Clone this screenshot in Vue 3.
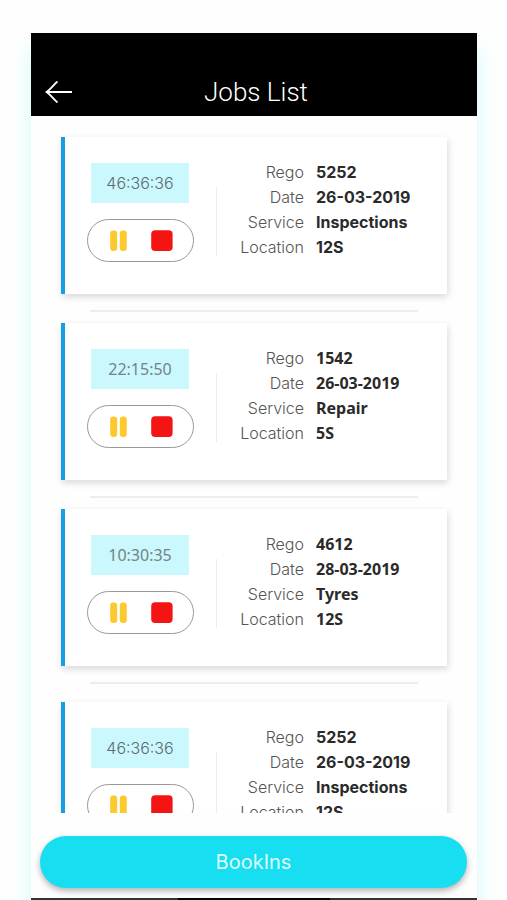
<script setup>
import { ref } from 'vue'

const jobs = ref([
  { id: 1, time: '46:36:36', rego: '5252', date: '26-03-2019', service: 'Inspections', location: '12S' },
  { id: 2, time: '22:15:50', rego: '1542', date: '26-03-2019', service: 'Repair', location: '5S', alt: true },
  { id: 3, time: '10:30:35', rego: '4612', date: '28-03-2019', service: 'Tyres', location: '12S', alt: true, wide: true },
  { id: 4, time: '46:36:36', rego: '5252', date: '26-03-2019', service: 'Inspections', location: '12S' },
])
</script>

<template>
  <div class="page">
    <div class="phone">
      <header class="topbar">
        <a href="#" class="back" aria-label="Back">
          <svg width="28" height="24" viewBox="0 0 28 24" fill="none" stroke="#fff" stroke-width="1.8">
            <path d="M27 12H2M12.5 1.5C9 4 6 9 1.5 12C6 15 9 20 12.5 22.5" />
          </svg>
        </a>
        <h1 class="title">Jobs List</h1>
      </header>

      <main class="list">
        <template v-for="(job, i) in jobs" :key="job.id">
          <article class="card" :class="{ alt: job.alt }">
            <div class="controls">
              <div class="timer">{{ job.time }}</div>
              <div class="pill">
                <button type="button" class="icon-btn" aria-label="Pause">
                  <svg width="18" height="22" viewBox="0 0 18 22" fill="#fcc92f">
                    <rect x="0.2" y="0.5" width="7" height="20.5" rx="3" />
                    <rect x="9.8" y="0.5" width="7" height="20.5" rx="3" />
                  </svg>
                </button>
                <button type="button" class="icon-btn" aria-label="Stop">
                  <svg width="22" height="22" viewBox="0 0 22 22" fill="#f41414">
                    <rect x="0.2" y="0.2" width="21.4" height="20.8" rx="4" />
                  </svg>
                </button>
              </div>
            </div>
            <div class="rule"></div>
            <dl class="details">
              <dt>Rego</dt><dd>{{ job.rego }}</dd>
              <dt>Date</dt><dd>{{ job.date }}</dd>
              <dt>Service</dt><dd>{{ job.service }}</dd>
              <dt>Location</dt><dd>{{ job.location }}</dd>
            </dl>
          </article>
          <hr v-if="i < jobs.length - 1" class="divider" :class="{ wide: job.wide }" />
        </template>
      </main>

      <footer class="footer">
        <button type="button" class="book">BookIns</button>
      </footer>
      <div class="navbar"></div>
    </div>
  </div>
</template>

<style>
body {
  background: #fefefe;
}
</style>

<style scoped>
.page {
  box-sizing: border-box;
  height: 100vh;
  padding: 33px 30px 0 31px;
  overflow: hidden;
  font-family: Inter, "Liberation Sans", sans-serif;
}
.phone {
  display: flex;
  flex-direction: column;
  height: 100%;
  background: #fefefe;
  box-shadow: 0 18px 16px 3px #dcfbfc;
}
.topbar {
  display: grid;
  grid-template-columns: 28px 1fr 24px;
  align-items: center;
  flex: none;
  padding: 43px 14px 8px;
  background: #000;
}
.back {
  display: flex;
}
.title {
  margin: 0;
  text-align: center;
  font: 300 26px/32px Roboto, sans-serif;
  color: #fff;
}
.list {
  flex: 1;
  min-height: 0;
  padding: 21px 30px 0;
  overflow-y: auto;
  scrollbar-width: none;
}
.card {
  display: flex;
  align-items: flex-start;
  box-sizing: border-box;
  min-height: 157px;
  padding: 23px 12px 24px 22px;
  border-left: 4px solid #149fe4;
  background: #fff;
  box-shadow: 1px 3px 7px rgba(0, 0, 0, 0.15);
}
.controls {
  flex: none;
  width: 107px;
  padding-top: 3px;
}
.timer {
  width: 98px;
  margin: 0 auto 16px 4px;
  font-size: 16px;
  font-weight: 300;
  line-height: 40px;
  text-align: center;
  color: #5c6c70;
  background: #cbf8fd;
}
.pill {
  display: flex;
  align-items: center;
  justify-content: space-between;
  box-sizing: border-box;
  height: 43px;
  padding: 0 20px 0 22px;
  border: 1px solid #999;
  border-radius: 22px;
}
.icon-btn {
  display: flex;
  padding: 0;
  border: 0;
  background: none;
}
.rule {
  flex: none;
  width: 1px;
  height: 69px;
  margin: 27px 0 0 22px;
  background: #ececec;
}
.details {
  display: grid;
  grid-template-columns: 87px 1fr;
  column-gap: 12px;
  flex: 1;
  margin: 0;
  font-size: 16px;
  line-height: 25px;
}
dt {
  text-align: right;
  font-weight: 300;
  color: #555;
}
dd {
  margin: 0;
  font-weight: 700;
  color: #2a2a2a;
}
.alt .timer,
.alt dd {
  font-family: "Noto Sans", sans-serif;
}
.alt .timer {
  font-weight: 400;
  color: #728488;
}
.divider {
  height: 2px;
  margin: 16px 29px 11px;
  border: 0;
  background: #ededed;
}
.divider.wide {
  margin-bottom: 18px;
}
.footer {
  flex: none;
  padding: 23px 10px 10px 9px;
}
.book {
  display: block;
  width: 100%;
  height: 52px;
  padding: 0;
  border: 0;
  border-radius: 26px;
  font: 400 20px/52px Inter, sans-serif;
  color: #dcfbff;
  background: #17def1;
  box-shadow: 0 3px 6px rgba(0, 0, 0, 0.3);
}
.navbar {
  flex: none;
  height: 2px;
  background: linear-gradient(90deg, #333 33%, #000 33%, #000 67%, #333 67%);
}
</style>
